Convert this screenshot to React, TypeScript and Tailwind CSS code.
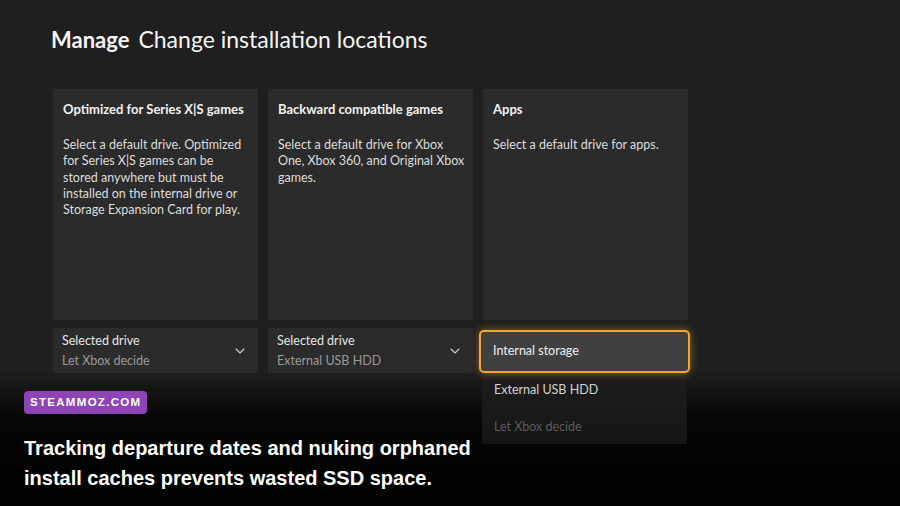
import { ChevronDown } from "lucide-react";

const cards = [
  {
    title: "Optimized for Series X|S games",
    description:
      "Select a default drive. Optimized for Series X|S games can be stored anywhere but must be installed on the internal drive or Storage Expansion Card for play.",
    selected: "Let Xbox decide",
  },
  {
    title: "Backward compatible games",
    description:
      "Select a default drive for Xbox One, Xbox 360, and Original Xbox games.",
    selected: "External USB HDD",
  },
];

function Card({ title, description }: { title: string; description: string }) {
  return (
    <div className="h-[231px] bg-[#2b2b2b] pl-[10px] pr-[8px] pt-[11px]">
      <h3 className="text-[13px] font-bold leading-[18px] text-[#f2f2f2]">{title}</h3>
      <p className="mt-[19px] text-[12.5px] leading-[16.3px] text-[#dcdcdc]">{description}</p>
    </div>
  );
}

function DriveSelect({ value }: { value: string }) {
  return (
    <div className="mt-[8px] flex h-[45px] items-center justify-between bg-[#2b2b2b] pl-[9px] pr-[10px]">
      <div className="flex flex-col">
        <span className="text-[12.5px] leading-[20px] text-[#e6e6e6]">Selected drive</span>
        <span className="text-[12.5px] leading-[20px] text-[#9a9a9a]">{value}</span>
      </div>
      <ChevronDown className="h-[16px] w-[16px] text-[#d0d0d0]" strokeWidth={1.6} />
    </div>
  );
}

export default function App() {
  return (
    <div
      className="relative h-[506px] w-[900px] overflow-hidden bg-[#1f1f1f]"
      style={{ fontFamily: 'Lato, "Noto Sans", sans-serif' }}
    >
      <div className="pl-[51px] pt-[24px]">
        <h1 className="flex items-baseline gap-[9px] leading-[30px] text-[#f4f4f4]">
          <span className="text-[22px] font-bold">Manage</span>
          <span className="text-[23px]">Change installation locations</span>
        </h1>
      </div>

      <div className="mt-[34px] grid w-fit grid-cols-[205px_205px_205px] gap-x-[10px] pl-[53px]">
        {cards.map((c) => (
          <div key={c.title}>
            <Card title={c.title} description={c.description} />
            <DriveSelect value={c.selected} />
          </div>
        ))}
        <div>
          <Card title="Apps" description="Select a default drive for apps." />
        </div>
      </div>

      {/* bottom fade */}
      <div className="absolute inset-x-0 bottom-0 h-[136px] bg-gradient-to-b from-transparent via-[rgba(0,0,0,0.8)] via-35% to-[#030303]" />

      {/* open drive menu for Apps */}
      <div className="absolute left-[482px] top-[330px] z-10 w-[205px] bg-gradient-to-b from-[#2a2a2a] via-[#1c1c1c] to-[#151515]">
        <div className="-mx-[3px] flex h-[43px] items-center rounded-[5px] border-2 border-[#f2a733] bg-[#404040] pl-[12px] shadow-[0_0_8px_rgba(242,167,51,0.55)]">
          <span className="text-[12.5px] text-[#f0f0f0]">Internal storage</span>
        </div>
        <div className="flex h-[35px] items-center pl-[12px]">
          <span className="text-[12.5px] text-[#d4d4d4]">External USB HDD</span>
        </div>
        <div className="flex h-[36px] items-center pl-[12px] pt-[2px]">
          <span className="text-[12.5px] text-[#5c5c5c]">Let Xbox decide</span>
        </div>
      </div>

      {/* caption overlay */}
      <div
        className="absolute bottom-[13px] left-[24px] z-20"
        style={{ fontFamily: '"Liberation Sans", Arial, sans-serif' }}
      >
        <span className="inline-block rounded-[4px] bg-[#8e44b4] px-[6px] py-[5px] text-[11.5px] font-bold leading-[13px] tracking-[1.3px] text-white">
          STEAMMOZ.COM
        </span>
        <p className="mt-[19px] text-[20px] font-bold leading-[30px] text-white">
          Tracking departure dates and nuking orphaned
          <br />
          install caches prevents wasted SSD space.
        </p>
      </div>
    </div>
  );
}
